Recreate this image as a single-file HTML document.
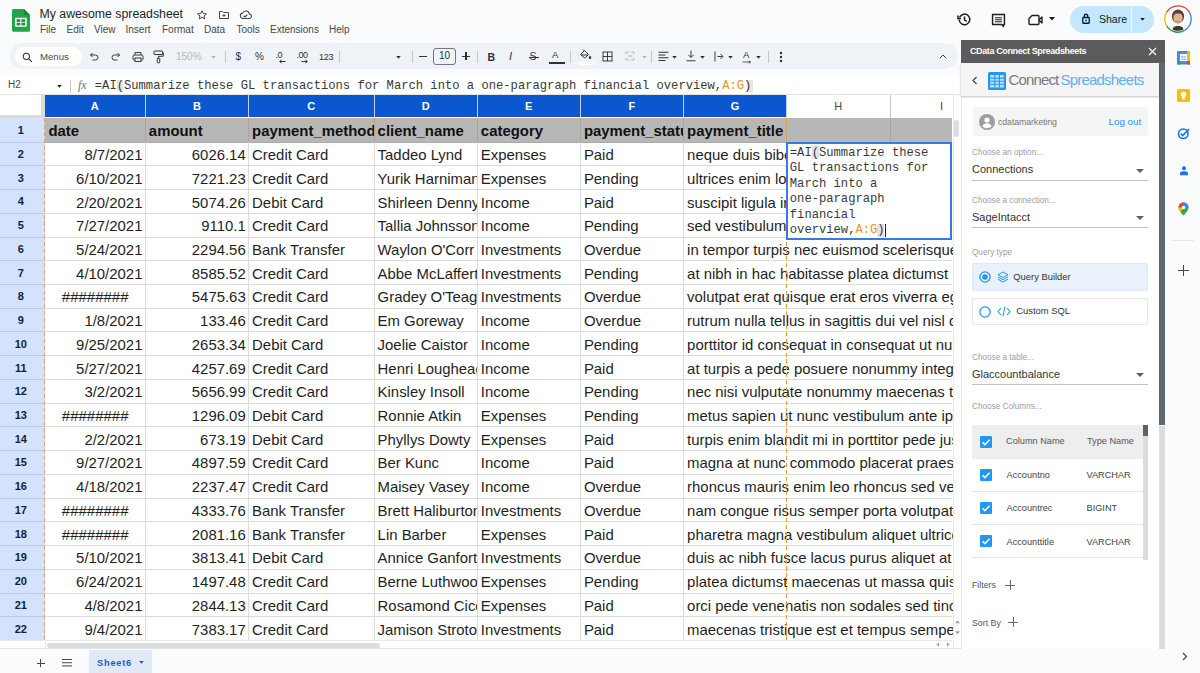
<!DOCTYPE html>
<html><head><meta charset="utf-8">
<style>
*{box-sizing:border-box;margin:0;padding:0}
html,body{width:1200px;height:673px;overflow:hidden;background:#f9fbfd;font-family:"Liberation Sans",sans-serif;color:#1f1f1f;position:relative}
.abs{position:absolute}
/* title bar */
#title{position:absolute;left:39.5px;top:7px;font-size:12.3px;color:#1f1f1f;white-space:nowrap;letter-spacing:0}
.menu{position:absolute;top:24px;font-size:10px;color:#444746;white-space:nowrap}
/* toolbar */
#toolbar{position:absolute;left:10px;top:43px;width:948px;height:25.5px;background:#eff3f8;border-radius:12.5px}
#menus{position:absolute;left:15px;top:47px;width:67px;height:19px;background:#fff;border-radius:10px}
.sep{position:absolute;top:51px;width:1px;height:12px;background:#c7c7c7}
.tb{position:absolute;font-size:9px;color:#444746;white-space:nowrap}
/* formula bar */
#fbar{position:absolute;left:0;top:75px;width:960px;height:20px;background:#fff;border-bottom:1px solid #e3e3e3}
.mono{font-family:"Liberation Mono",monospace}
/* grid */
#grid{position:absolute;left:0;top:95px;width:952.5px;height:545.5px;background:#fff;overflow:hidden}
#gridin{position:absolute;left:0;top:-95px;width:952.5px;height:673px}
.ch{position:absolute;top:95px;height:23.4px;background:#fff;color:#444746;font-size:11px;text-align:center;line-height:22px;border-right:1px solid #c7c7c7}
.ch.sel{background:#0b57d0;color:#fff;font-weight:bold;border-right:1.2px solid #c0d2f2;border-bottom:none;height:22px}
.ch.corner{left:0;width:44.8px;height:23.4px;background:#fff;border-right:4.5px solid #dadcd9;border-bottom:3.8px solid #dadcd9}
.rh{position:absolute;left:0;width:44.5px;background:#d3e3fd;color:#0f1f3f;font-weight:bold;font-size:11px;text-align:center;display:flex;align-items:center;justify-content:center;padding-right:2.8px}
.r1bg{position:absolute;left:44.8px;width:907.7px;background:#b7b7b7}
.hl{position:absolute;left:44.8px;width:907.7px;height:1px;background:#dcdcdc}
.hl.dark{background:#a9a9a9}
.hlr{position:absolute;left:0;width:44.5px;height:1px;background:#bccbe3}
.vl{position:absolute;width:1px;background:#dcdcdc}
.vl.dark{background:#a5a5a5}
.ct{position:absolute;height:23.73px;font-size:14.92px;line-height:23.73px;padding:0 3px 0 3.6px;white-space:nowrap;overflow:hidden;color:#1f1f1f}
.ct.rt{text-align:right;padding-right:2.5px}
.ct.b{font-weight:bold;color:#111;margin-top:-0.9px}
.ct.hash{padding-left:17px;font-size:15px}
.lbl{left:972px;margin-top:0.5px;font-size:8.2px;color:#9e9e9e;white-space:nowrap}
.val{left:972px;margin-top:1px;font-size:11px;color:#333;white-space:nowrap}
.th{margin-top:0.3px;font-size:9.2px;color:#555;white-space:nowrap}
.td{margin-top:0.8px;font-size:9.2px;color:#444;white-space:nowrap}
</style></head><body>

<!-- Sheets logo -->
<svg class="abs" style="left:12px;top:9.3px" width="18" height="23" viewBox="0 0 18 23">
<path d="M1.5 0H12l6 6v15.3a1.5 1.5 0 0 1-1.5 1.5h-15A1.5 1.5 0 0 1 0 21.3V1.5A1.5 1.5 0 0 1 1.5 0z" fill="#1fa64a"/>
<path d="M12 0l6 6h-5a1 1 0 0 1-1-1z" fill="#128c3b"/>
<rect x="3" y="8.7" width="11.7" height="9" rx="0.8" fill="#fff"/>
<rect x="4.6" y="10.2" width="3.7" height="2.7" fill="#1c8f42"/>
<rect x="9.4" y="10.2" width="3.7" height="2.7" fill="#1c8f42"/>
<rect x="4.6" y="13.7" width="3.7" height="2.7" fill="#1c8f42"/>
<rect x="9.4" y="13.7" width="3.7" height="2.7" fill="#1c8f42"/>
</svg>
<div id="title">My awesome spreadsheet</div>

<div class="menu" style="left:40px">File</div>
<div class="menu" style="left:66.5px">Edit</div>
<div class="menu" style="left:94px">View</div>
<div class="menu" style="left:125.5px">Insert</div>
<div class="menu" style="left:162px">Format</div>
<div class="menu" style="left:204px">Data</div>
<div class="menu" style="left:236.5px">Tools</div>
<div class="menu" style="left:270px">Extensions</div>
<div class="menu" style="left:329px">Help</div>


<!-- title icons -->
<svg class="abs" style="left:196px;top:9px" width="12" height="12" viewBox="0 0 24 24"><path d="M12 3.5l2.6 5.6 6.1.6-4.6 4.1 1.3 6-5.4-3.1-5.4 3.1 1.3-6-4.6-4.1 6.1-.6z" fill="none" stroke="#444746" stroke-width="2" stroke-linejoin="round"/></svg>
<svg class="abs" style="left:218px;top:9px" width="12" height="12" viewBox="0 0 24 24"><path d="M3 5h6l2 2h10v12H3z" fill="none" stroke="#444746" stroke-width="2" stroke-linejoin="round"/><path d="M12 10v6M9 13h6" stroke="#444746" stroke-width="1.8"/></svg>
<svg class="abs" style="left:238.5px;top:8.5px" width="13" height="12" viewBox="0 0 26 24"><path d="M7 19h13a4.5 4.5 0 0 0 .6-9A7 7 0 0 0 7.2 8.2 5.5 5.5 0 0 0 7 19z" fill="none" stroke="#444746" stroke-width="2.2"/><path d="M9.5 13.5l2.5 2.5 4.5-4.5" fill="none" stroke="#444746" stroke-width="2.2"/></svg>

<!-- top right -->
<svg class="abs" style="left:957px;top:12px" width="15" height="15" viewBox="0 0 24 24"><path d="M4.2 8.5A8.5 8.5 0 1 1 3.5 12" fill="none" stroke="#1f1f1f" stroke-width="2.4"/><path d="M1.5 5.5v5h5" fill="none" stroke="#1f1f1f" stroke-width="2.4"/><path d="M12 7v5.5l3.5 2.5" fill="none" stroke="#1f1f1f" stroke-width="2.4"/></svg>
<svg class="abs" style="left:990.5px;top:12.5px" width="15" height="15" viewBox="0 0 24 24"><path d="M2.5 2.5h19v16h-1.5v3l-3-3h-14.5z" fill="none" stroke="#1f1f1f" stroke-width="2.3" stroke-linejoin="round"/><path d="M6.5 7.5h11M6.5 10.7h11M6.5 13.9h11" stroke="#1f1f1f" stroke-width="1.8"/></svg>
<svg class="abs" style="left:1027.5px;top:14px" width="15" height="12" viewBox="0 0 30 24"><path d="M8 3h12a2 2 0 0 1 2 2v14a2 2 0 0 1-2 2H4a2 2 0 0 1-2-2V9z" fill="none" stroke="#1f1f1f" stroke-width="2.8" stroke-linejoin="round"/><path d="M22 12l6-6v12z" fill="none" stroke="#1f1f1f" stroke-width="2.6" stroke-linejoin="round"/></svg>
<svg class="abs" style="left:1049px;top:17px" width="6" height="4" viewBox="0 0 6 4"><path d="M0 0h6L3 3.5z" fill="#1f1f1f"/></svg>
<div class="abs" style="left:1070px;top:5.5px;width:83.5px;height:27px;background:#c2e7ff;border-radius:14px"></div>
<div class="abs" style="left:1130.5px;top:5.5px;width:1px;height:27px;background:#f9fbfd"></div>
<svg class="abs" style="left:1082px;top:13px" width="8" height="11" viewBox="0 0 16 22"><rect x="1.5" y="9" width="13" height="11.5" rx="1.5" fill="none" stroke="#001d35" stroke-width="2.6"/><path d="M4.5 9V6a3.5 3.5 0 0 1 7 0v3" fill="none" stroke="#001d35" stroke-width="2.6"/><circle cx="8" cy="14.8" r="1.6" fill="#001d35"/></svg>
<div class="abs" style="left:1099px;top:13px;font-size:10.5px;color:#001d35;letter-spacing:0">Share</div>
<svg class="abs" style="left:1139.5px;top:17.5px" width="5" height="3" viewBox="0 0 6 4"><path d="M0 0h6L3 3.5z" fill="#001d35"/></svg>
<svg class="abs" style="left:1164px;top:4.8px" width="28" height="28" viewBox="0 0 28 28">
<circle cx="14" cy="14" r="12.4" fill="#fff"/>
<path d="M2.57 7.40A13.2 13.2 0 0 1 25.43 7.40" fill="none" stroke="#e53935" stroke-width="1.3"/>
<path d="M25.43 7.40A13.2 13.2 0 0 1 20.60 25.43" fill="none" stroke="#3b78e7" stroke-width="1.3"/>
<path d="M20.60 25.43A13.2 13.2 0 0 1 2.57 20.60" fill="none" stroke="#2e9d4a" stroke-width="1.3"/>
<path d="M2.57 20.60A13.2 13.2 0 0 1 2.57 7.40" fill="none" stroke="#f6b400" stroke-width="1.3"/>
<path d="M8.6 24.5c0-2.6 2.4-3.6 5.4-3.6s5.4 1 5.4 3.6c-1.6.9-3.4 1.3-5.4 1.3s-3.8-.4-5.4-1.3z" fill="#3f3633"/>
<ellipse cx="14" cy="11.4" rx="6.1" ry="7" fill="#5a4038"/>
<ellipse cx="14" cy="13" rx="4.6" ry="5.6" fill="#e5b08e"/>
<path d="M9.4 10.2c0-3.2 2-4.6 4.6-4.6s4.6 1.4 4.6 4.6c-1-1.4-2.4-1.8-4.6-1.8s-3.6.4-4.6 1.8z" fill="#5a4038"/>
<path d="M12.3 16.6q1.7.9 3.4 0" stroke="#a0604a" stroke-width="0.7" fill="none"/>
</svg>

<div id="toolbar"></div>
<div id="menus"></div>

<div id="fbar"></div>

<svg class="abs" style="left:21.5px;top:51.5px" width="11" height="11" viewBox="0 0 24 24"><circle cx="9.5" cy="9.5" r="6.8" fill="none" stroke="#303134" stroke-width="2.3"/><path d="M14.5 14.5l7 7" stroke="#303134" stroke-width="2.4"/></svg>
<div class="abs" style="left:40px;top:51px;font-size:9.6px;color:#444746">Menus</div>
<svg class="abs" style="left:89px;top:51px" width="11" height="11" viewBox="0 0 22 22"><path d="M7 4L3 8l4 4" fill="none" stroke="#303134" stroke-width="1.9"/><path d="M3 8h10a5 5 0 0 1 0 10H7" fill="none" stroke="#303134" stroke-width="1.9"/></svg>
<svg class="abs" style="left:110px;top:51px" width="11" height="11" viewBox="0 0 22 22"><path d="M15 4l4 4-4 4" fill="none" stroke="#303134" stroke-width="1.9"/><path d="M19 8H9a5 5 0 0 0 0 10h6" fill="none" stroke="#303134" stroke-width="1.9"/></svg>
<svg class="abs" style="left:131.5px;top:50.5px" width="12" height="12" viewBox="0 0 24 24"><path d="M6 8V3h12v5" fill="none" stroke="#303134" stroke-width="1.9"/><rect x="2" y="8" width="20" height="10" rx="2" fill="none" stroke="#303134" stroke-width="1.9"/><rect x="6" y="14" width="12" height="7" fill="#edf2fa" stroke="#303134" stroke-width="1.9"/></svg>
<svg class="abs" style="left:153px;top:50px" width="11" height="14" viewBox="0 0 22 28"><rect x="2" y="2" width="17" height="7" rx="1" fill="none" stroke="#303134" stroke-width="2"/><path d="M19 5.5h1.5v7H11v4" fill="none" stroke="#303134" stroke-width="2"/><rect x="8.5" y="16.5" width="5" height="9" rx="1" fill="none" stroke="#303134" stroke-width="2"/></svg>
<div class="abs" style="left:176px;top:51px;font-size:10px;color:#b4b8bd">150%</div>
<svg class="abs" style="left:211px;top:55.5px" width="5" height="3" viewBox="0 0 6 4"><path d="M0 0h6L3 3.5z" fill="#b4b8bd"/></svg>
<div class="sep" style="left:225px"></div>
<div class="abs" style="left:235.5px;top:51px;font-size:10px;color:#303134">$</div>
<div class="abs" style="left:255px;top:51px;font-size:10px;color:#303134">%</div>
<div class="abs" style="left:275.5px;top:50px;font-size:9px;color:#303134;letter-spacing:-0.5px">.0</div>
<svg class="abs" style="left:279px;top:59px" width="7" height="5" viewBox="0 0 14 10"><path d="M13 5H2M5 1.5L1.5 5 5 8.5" fill="none" stroke="#303134" stroke-width="2"/></svg>
<div class="abs" style="left:296.5px;top:50px;font-size:9px;color:#303134;letter-spacing:-0.5px">.00</div>
<svg class="abs" style="left:301px;top:59px" width="7" height="5" viewBox="0 0 14 10"><path d="M1 5h11M9 1.5L12.5 5 9 8.5" fill="none" stroke="#303134" stroke-width="2"/></svg>
<div class="abs" style="left:319px;top:51.5px;font-size:9px;color:#303134;letter-spacing:-0.2px">123</div>
<div class="sep" style="left:339px"></div>
<svg class="abs" style="left:396px;top:55.5px" width="5" height="3" viewBox="0 0 6 4"><path d="M0 0h6L3 3.5z" fill="#303134"/></svg>
<div class="sep" style="left:411.5px"></div>
<div class="abs" style="left:419px;top:56px;width:7.5px;height:1.3px;background:#303134"></div>
<div class="abs" style="left:433px;top:48px;width:23px;height:16.5px;border:1px solid #747775;border-radius:3px;font-size:10px;text-align:center;line-height:14.5px;color:#303134">10</div>
<div class="abs" style="left:462px;top:56px;width:8px;height:1.3px;background:#303134"></div>
<div class="abs" style="left:465.35px;top:52px;width:1.3px;height:8px;background:#303134"></div>
<div class="sep" style="left:476.5px"></div>
<div class="abs" style="left:487.5px;top:50.5px;font-size:10.5px;font-weight:bold;color:#303134">B</div>
<div class="abs" style="left:509px;top:50px;font-size:11px;font-style:italic;color:#303134">I</div>
<div class="abs" style="left:529.5px;top:50px;font-size:10.5px;color:#303134">S</div>
<div class="abs" style="left:528.5px;top:56.5px;width:10px;height:1.2px;background:#303134"></div>
<div class="abs" style="left:552px;top:49px;font-size:9.5px;color:#303134">A</div>
<div class="abs" style="left:549px;top:61.5px;width:15.5px;height:2.8px;background:#303134"></div>
<div class="sep" style="left:570px"></div>
<svg class="abs" style="left:579px;top:49px" width="13" height="12" viewBox="0 0 26 24"><path d="M3 11l8-8 8 8-6 6a2 2 0 0 1-3 0z" fill="none" stroke="#303134" stroke-width="2"/><path d="M4 12h14" stroke="#303134" stroke-width="2"/><path d="M22 13s-2.5 3-2.5 4.5a2.5 2.5 0 0 0 5 0C24.5 16 22 13 22 13z" fill="#303134"/><path d="M8 1l3 3" stroke="#303134" stroke-width="1.9"/></svg>
<div class="abs" style="left:578.5px;top:62px;width:15px;height:2.5px;background:#fff"></div>
<svg class="abs" style="left:602px;top:50.5px" width="11" height="11" viewBox="0 0 22 22"><rect x="2" y="2" width="18" height="18" fill="none" stroke="#303134" stroke-width="1.9"/><path d="M11 2v18M2 11h18" stroke="#303134" stroke-width="1.9"/></svg>
<svg class="abs" style="left:625px;top:51px" width="10" height="10" viewBox="0 0 20 20"><path d="M2 6V2h6M12 2h6v4M18 14v4h-6M8 18H2v-4M5 10h10" fill="none" stroke="#b4b8bd" stroke-width="2"/></svg>
<svg class="abs" style="left:641.5px;top:55.5px" width="5" height="3" viewBox="0 0 6 4"><path d="M0 0h6L3 3.5z" fill="#b4b8bd"/></svg>
<div class="sep" style="left:651px"></div>
<svg class="abs" style="left:657.5px;top:50.5px" width="11" height="11" viewBox="0 0 22 22"><path d="M1 2.5h20M1 8h14M1 13.5h20M1 19h14" stroke="#303134" stroke-width="2"/></svg>
<svg class="abs" style="left:671.5px;top:55.5px" width="5" height="3" viewBox="0 0 6 4"><path d="M0 0h6L3 3.5z" fill="#303134"/></svg>
<svg class="abs" style="left:686px;top:50px" width="10" height="12" viewBox="0 0 20 24"><path d="M10 1v14M4.5 9.5L10 15l5.5-5.5M1 21.5h18" fill="none" stroke="#303134" stroke-width="1.9"/></svg>
<svg class="abs" style="left:699.5px;top:55.5px" width="5" height="3" viewBox="0 0 6 4"><path d="M0 0h6L3 3.5z" fill="#303134"/></svg>
<svg class="abs" style="left:713.5px;top:50.5px" width="10" height="11" viewBox="0 0 20 22"><path d="M2 1v20M7 11h10M13 6l5 5-5 5" fill="none" stroke="#303134" stroke-width="1.9"/></svg>
<svg class="abs" style="left:727.5px;top:55.5px" width="5" height="3" viewBox="0 0 6 4"><path d="M0 0h6L3 3.5z" fill="#303134"/></svg>
<div class="abs" style="left:743px;top:49px;font-size:9.5px;color:#303134">A</div>
<svg class="abs" style="left:742px;top:59.5px" width="10" height="4" viewBox="0 0 20 8"><path d="M1 4h16M13.5 1.5l3.5 2.5-3.5 2.5" fill="none" stroke="#303134" stroke-width="1.6"/></svg>
<svg class="abs" style="left:755.5px;top:55.5px" width="5" height="3" viewBox="0 0 6 4"><path d="M0 0h6L3 3.5z" fill="#303134"/></svg>
<div class="sep" style="left:767.5px"></div>
<svg class="abs" style="left:779px;top:50.5px" width="4" height="12" viewBox="0 0 4 12"><circle cx="2" cy="2" r="1.2" fill="#303134"/><circle cx="2" cy="6" r="1.2" fill="#303134"/><circle cx="2" cy="10" r="1.2" fill="#303134"/></svg>
<svg class="abs" style="left:938.5px;top:54px" width="8" height="5" viewBox="0 0 16 10"><path d="M1.5 8.5L8 2l6.5 6.5" fill="none" stroke="#303134" stroke-width="1.9"/></svg>

<!-- formula bar -->
<div class="abs" style="left:8px;top:79.3px;font-size:10px;color:#444746">H2</div>
<svg class="abs" style="left:57px;top:85px" width="5" height="3" viewBox="0 0 6 4"><path d="M0 0h6L3 3.5z" fill="#1f1f1f"/></svg>
<div class="abs" style="left:70px;top:79.5px;width:1px;height:13px;background:#c7c7c7"></div>
<div class="abs" style="left:78px;top:78px;font-size:12px;font-style:italic;color:#70757a;font-family:'Liberation Serif',serif">fx</div>
<div class="abs" style="left:116.8px;top:79.5px;width:6.5px;height:12px;background:#e6e6e6"></div>
<div class="abs" style="left:746.5px;top:79.5px;width:6.5px;height:12px;background:#e6e6e6"></div>
<div class="abs mono" style="left:94.8px;top:78.5px;font-size:12.17px;line-height:14px;color:#3a3a3a;white-space:nowrap">=AI(Summarize these GL transactions for March into a one-paragraph financial overview,<span style="color:#e8912d">A:G</span>)</div>


<div id="grid"><div id="gridin">
<div class="ch corner"></div>
<div class="ch sel" style="left:44.8px;width:100.95px">A</div>
<div class="ch sel" style="left:145.75px;width:103.25px">B</div>
<div class="ch sel" style="left:249px;width:125.5px">C</div>
<div class="ch sel" style="left:374.5px;width:103.25px">D</div>
<div class="ch sel" style="left:477.75px;width:103.05px">E</div>
<div class="ch sel" style="left:580.8px;width:103.2px">F</div>
<div class="ch sel" style="left:684px;width:103px">G</div>
<div class="ch" style="left:787px;width:103.5px">H</div>
<div class="ch" style="left:890.5px;width:103.2px">I</div>
<div class="rh" style="top:118.4px;height:23.73px">1</div>
<div class="rh" style="top:142.13px;height:23.73px">2</div>
<div class="rh" style="top:165.86px;height:23.73px">3</div>
<div class="rh" style="top:189.59px;height:23.73px">4</div>
<div class="rh" style="top:213.32px;height:23.73px">5</div>
<div class="rh" style="top:237.05px;height:23.73px">6</div>
<div class="rh" style="top:260.78px;height:23.73px">7</div>
<div class="rh" style="top:284.51px;height:23.73px">8</div>
<div class="rh" style="top:308.24px;height:23.73px">9</div>
<div class="rh" style="top:331.97px;height:23.73px">10</div>
<div class="rh" style="top:355.7px;height:23.73px">11</div>
<div class="rh" style="top:379.43px;height:23.73px">12</div>
<div class="rh" style="top:403.16px;height:23.73px">13</div>
<div class="rh" style="top:426.89px;height:23.73px">14</div>
<div class="rh" style="top:450.62px;height:23.73px">15</div>
<div class="rh" style="top:474.35px;height:23.73px">16</div>
<div class="rh" style="top:498.08px;height:23.73px">17</div>
<div class="rh" style="top:521.81px;height:23.73px">18</div>
<div class="rh" style="top:545.54px;height:23.73px">19</div>
<div class="rh" style="top:569.27px;height:23.73px">20</div>
<div class="rh" style="top:593px;height:23.73px">21</div>
<div class="rh" style="top:616.73px;height:23.73px">22</div>
<div class="r1bg" style="top:118.4px;height:23.73px"></div>
<div class="hl dark" style="top:141.63px"></div>
<div class="hl" style="top:165.36px"></div>
<div class="hl" style="top:189.09px"></div>
<div class="hl" style="top:212.82px"></div>
<div class="hl" style="top:236.55px"></div>
<div class="hl" style="top:260.28px"></div>
<div class="hl" style="top:284.01px"></div>
<div class="hl" style="top:307.74px"></div>
<div class="hl" style="top:331.47px"></div>
<div class="hl" style="top:355.2px"></div>
<div class="hl" style="top:378.93px"></div>
<div class="hl" style="top:402.66px"></div>
<div class="hl" style="top:426.39px"></div>
<div class="hl" style="top:450.12px"></div>
<div class="hl" style="top:473.85px"></div>
<div class="hl" style="top:497.58px"></div>
<div class="hl" style="top:521.31px"></div>
<div class="hl" style="top:545.04px"></div>
<div class="hl" style="top:568.77px"></div>
<div class="hl" style="top:592.5px"></div>
<div class="hl" style="top:616.23px"></div>
<div class="hl" style="top:639.96px"></div>
<div class="hlr" style="top:141.63px"></div>
<div class="hlr" style="top:165.36px"></div>
<div class="hlr" style="top:189.09px"></div>
<div class="hlr" style="top:212.82px"></div>
<div class="hlr" style="top:236.55px"></div>
<div class="hlr" style="top:260.28px"></div>
<div class="hlr" style="top:284.01px"></div>
<div class="hlr" style="top:307.74px"></div>
<div class="hlr" style="top:331.47px"></div>
<div class="hlr" style="top:355.2px"></div>
<div class="hlr" style="top:378.93px"></div>
<div class="hlr" style="top:402.66px"></div>
<div class="hlr" style="top:426.39px"></div>
<div class="hlr" style="top:450.12px"></div>
<div class="hlr" style="top:473.85px"></div>
<div class="hlr" style="top:497.58px"></div>
<div class="hlr" style="top:521.31px"></div>
<div class="hlr" style="top:545.04px"></div>
<div class="hlr" style="top:568.77px"></div>
<div class="hlr" style="top:592.5px"></div>
<div class="hlr" style="top:616.23px"></div>
<div class="hlr" style="top:639.96px"></div>
<div class="vl dark" style="left:144.75px;top:118.4px;height:23.73px"></div>
<div class="vl" style="left:144.75px;top:142.13px;height:23.73px"></div>
<div class="vl" style="left:144.75px;top:165.86px;height:23.73px"></div>
<div class="vl" style="left:144.75px;top:189.59px;height:23.73px"></div>
<div class="vl" style="left:144.75px;top:213.32px;height:23.73px"></div>
<div class="vl" style="left:144.75px;top:237.05px;height:23.73px"></div>
<div class="vl" style="left:144.75px;top:260.78px;height:23.73px"></div>
<div class="vl" style="left:144.75px;top:284.51px;height:23.73px"></div>
<div class="vl" style="left:144.75px;top:308.24px;height:23.73px"></div>
<div class="vl" style="left:144.75px;top:331.97px;height:23.73px"></div>
<div class="vl" style="left:144.75px;top:355.7px;height:23.73px"></div>
<div class="vl" style="left:144.75px;top:379.43px;height:23.73px"></div>
<div class="vl" style="left:144.75px;top:403.16px;height:23.73px"></div>
<div class="vl" style="left:144.75px;top:426.89px;height:23.73px"></div>
<div class="vl" style="left:144.75px;top:450.62px;height:23.73px"></div>
<div class="vl" style="left:144.75px;top:474.35px;height:23.73px"></div>
<div class="vl" style="left:144.75px;top:498.08px;height:23.73px"></div>
<div class="vl" style="left:144.75px;top:521.81px;height:23.73px"></div>
<div class="vl" style="left:144.75px;top:545.54px;height:23.73px"></div>
<div class="vl" style="left:144.75px;top:569.27px;height:23.73px"></div>
<div class="vl" style="left:144.75px;top:593px;height:23.73px"></div>
<div class="vl" style="left:144.75px;top:616.73px;height:23.73px"></div>
<div class="vl dark" style="left:248px;top:118.4px;height:23.73px"></div>
<div class="vl" style="left:248px;top:142.13px;height:23.73px"></div>
<div class="vl" style="left:248px;top:165.86px;height:23.73px"></div>
<div class="vl" style="left:248px;top:189.59px;height:23.73px"></div>
<div class="vl" style="left:248px;top:213.32px;height:23.73px"></div>
<div class="vl" style="left:248px;top:237.05px;height:23.73px"></div>
<div class="vl" style="left:248px;top:260.78px;height:23.73px"></div>
<div class="vl" style="left:248px;top:284.51px;height:23.73px"></div>
<div class="vl" style="left:248px;top:308.24px;height:23.73px"></div>
<div class="vl" style="left:248px;top:331.97px;height:23.73px"></div>
<div class="vl" style="left:248px;top:355.7px;height:23.73px"></div>
<div class="vl" style="left:248px;top:379.43px;height:23.73px"></div>
<div class="vl" style="left:248px;top:403.16px;height:23.73px"></div>
<div class="vl" style="left:248px;top:426.89px;height:23.73px"></div>
<div class="vl" style="left:248px;top:450.62px;height:23.73px"></div>
<div class="vl" style="left:248px;top:474.35px;height:23.73px"></div>
<div class="vl" style="left:248px;top:498.08px;height:23.73px"></div>
<div class="vl" style="left:248px;top:521.81px;height:23.73px"></div>
<div class="vl" style="left:248px;top:545.54px;height:23.73px"></div>
<div class="vl" style="left:248px;top:569.27px;height:23.73px"></div>
<div class="vl" style="left:248px;top:593px;height:23.73px"></div>
<div class="vl" style="left:248px;top:616.73px;height:23.73px"></div>
<div class="vl dark" style="left:373.5px;top:118.4px;height:23.73px"></div>
<div class="vl" style="left:373.5px;top:142.13px;height:23.73px"></div>
<div class="vl" style="left:373.5px;top:165.86px;height:23.73px"></div>
<div class="vl" style="left:373.5px;top:189.59px;height:23.73px"></div>
<div class="vl" style="left:373.5px;top:213.32px;height:23.73px"></div>
<div class="vl" style="left:373.5px;top:237.05px;height:23.73px"></div>
<div class="vl" style="left:373.5px;top:260.78px;height:23.73px"></div>
<div class="vl" style="left:373.5px;top:284.51px;height:23.73px"></div>
<div class="vl" style="left:373.5px;top:308.24px;height:23.73px"></div>
<div class="vl" style="left:373.5px;top:331.97px;height:23.73px"></div>
<div class="vl" style="left:373.5px;top:355.7px;height:23.73px"></div>
<div class="vl" style="left:373.5px;top:379.43px;height:23.73px"></div>
<div class="vl" style="left:373.5px;top:403.16px;height:23.73px"></div>
<div class="vl" style="left:373.5px;top:426.89px;height:23.73px"></div>
<div class="vl" style="left:373.5px;top:450.62px;height:23.73px"></div>
<div class="vl" style="left:373.5px;top:474.35px;height:23.73px"></div>
<div class="vl" style="left:373.5px;top:498.08px;height:23.73px"></div>
<div class="vl" style="left:373.5px;top:521.81px;height:23.73px"></div>
<div class="vl" style="left:373.5px;top:545.54px;height:23.73px"></div>
<div class="vl" style="left:373.5px;top:569.27px;height:23.73px"></div>
<div class="vl" style="left:373.5px;top:593px;height:23.73px"></div>
<div class="vl" style="left:373.5px;top:616.73px;height:23.73px"></div>
<div class="vl dark" style="left:476.75px;top:118.4px;height:23.73px"></div>
<div class="vl" style="left:476.75px;top:142.13px;height:23.73px"></div>
<div class="vl" style="left:476.75px;top:165.86px;height:23.73px"></div>
<div class="vl" style="left:476.75px;top:189.59px;height:23.73px"></div>
<div class="vl" style="left:476.75px;top:213.32px;height:23.73px"></div>
<div class="vl" style="left:476.75px;top:237.05px;height:23.73px"></div>
<div class="vl" style="left:476.75px;top:260.78px;height:23.73px"></div>
<div class="vl" style="left:476.75px;top:284.51px;height:23.73px"></div>
<div class="vl" style="left:476.75px;top:308.24px;height:23.73px"></div>
<div class="vl" style="left:476.75px;top:331.97px;height:23.73px"></div>
<div class="vl" style="left:476.75px;top:355.7px;height:23.73px"></div>
<div class="vl" style="left:476.75px;top:379.43px;height:23.73px"></div>
<div class="vl" style="left:476.75px;top:403.16px;height:23.73px"></div>
<div class="vl" style="left:476.75px;top:426.89px;height:23.73px"></div>
<div class="vl" style="left:476.75px;top:450.62px;height:23.73px"></div>
<div class="vl" style="left:476.75px;top:474.35px;height:23.73px"></div>
<div class="vl" style="left:476.75px;top:498.08px;height:23.73px"></div>
<div class="vl" style="left:476.75px;top:521.81px;height:23.73px"></div>
<div class="vl" style="left:476.75px;top:545.54px;height:23.73px"></div>
<div class="vl" style="left:476.75px;top:569.27px;height:23.73px"></div>
<div class="vl" style="left:476.75px;top:593px;height:23.73px"></div>
<div class="vl" style="left:476.75px;top:616.73px;height:23.73px"></div>
<div class="vl dark" style="left:579.8px;top:118.4px;height:23.73px"></div>
<div class="vl" style="left:579.8px;top:142.13px;height:23.73px"></div>
<div class="vl" style="left:579.8px;top:165.86px;height:23.73px"></div>
<div class="vl" style="left:579.8px;top:189.59px;height:23.73px"></div>
<div class="vl" style="left:579.8px;top:213.32px;height:23.73px"></div>
<div class="vl" style="left:579.8px;top:237.05px;height:23.73px"></div>
<div class="vl" style="left:579.8px;top:260.78px;height:23.73px"></div>
<div class="vl" style="left:579.8px;top:284.51px;height:23.73px"></div>
<div class="vl" style="left:579.8px;top:308.24px;height:23.73px"></div>
<div class="vl" style="left:579.8px;top:331.97px;height:23.73px"></div>
<div class="vl" style="left:579.8px;top:355.7px;height:23.73px"></div>
<div class="vl" style="left:579.8px;top:379.43px;height:23.73px"></div>
<div class="vl" style="left:579.8px;top:403.16px;height:23.73px"></div>
<div class="vl" style="left:579.8px;top:426.89px;height:23.73px"></div>
<div class="vl" style="left:579.8px;top:450.62px;height:23.73px"></div>
<div class="vl" style="left:579.8px;top:474.35px;height:23.73px"></div>
<div class="vl" style="left:579.8px;top:498.08px;height:23.73px"></div>
<div class="vl" style="left:579.8px;top:521.81px;height:23.73px"></div>
<div class="vl" style="left:579.8px;top:545.54px;height:23.73px"></div>
<div class="vl" style="left:579.8px;top:569.27px;height:23.73px"></div>
<div class="vl" style="left:579.8px;top:593px;height:23.73px"></div>
<div class="vl" style="left:579.8px;top:616.73px;height:23.73px"></div>
<div class="vl dark" style="left:683px;top:118.4px;height:23.73px"></div>
<div class="vl" style="left:683px;top:142.13px;height:23.73px"></div>
<div class="vl" style="left:683px;top:165.86px;height:23.73px"></div>
<div class="vl" style="left:683px;top:189.59px;height:23.73px"></div>
<div class="vl" style="left:683px;top:213.32px;height:23.73px"></div>
<div class="vl" style="left:683px;top:237.05px;height:23.73px"></div>
<div class="vl" style="left:683px;top:260.78px;height:23.73px"></div>
<div class="vl" style="left:683px;top:284.51px;height:23.73px"></div>
<div class="vl" style="left:683px;top:308.24px;height:23.73px"></div>
<div class="vl" style="left:683px;top:331.97px;height:23.73px"></div>
<div class="vl" style="left:683px;top:355.7px;height:23.73px"></div>
<div class="vl" style="left:683px;top:379.43px;height:23.73px"></div>
<div class="vl" style="left:683px;top:403.16px;height:23.73px"></div>
<div class="vl" style="left:683px;top:426.89px;height:23.73px"></div>
<div class="vl" style="left:683px;top:450.62px;height:23.73px"></div>
<div class="vl" style="left:683px;top:474.35px;height:23.73px"></div>
<div class="vl" style="left:683px;top:498.08px;height:23.73px"></div>
<div class="vl" style="left:683px;top:521.81px;height:23.73px"></div>
<div class="vl" style="left:683px;top:545.54px;height:23.73px"></div>
<div class="vl" style="left:683px;top:569.27px;height:23.73px"></div>
<div class="vl" style="left:683px;top:593px;height:23.73px"></div>
<div class="vl" style="left:683px;top:616.73px;height:23.73px"></div>
<div class="vl dark" style="left:786px;top:118.4px;height:23.73px"></div>
<div class="vl" style="left:786px;top:142.13px;height:23.73px"></div>
<div class="vl" style="left:786px;top:165.86px;height:23.73px"></div>
<div class="vl" style="left:786px;top:189.59px;height:23.73px"></div>
<div class="vl" style="left:786px;top:213.32px;height:23.73px"></div>
<div class="vl dark" style="left:889.5px;top:118.4px;height:23.73px"></div>
<div class="vl" style="left:889.5px;top:142.13px;height:23.73px"></div>
<div class="vl" style="left:889.5px;top:165.86px;height:23.73px"></div>
<div class="vl" style="left:889.5px;top:189.59px;height:23.73px"></div>
<div class="vl" style="left:889.5px;top:213.32px;height:23.73px"></div>
<div class="ct b" style="left:44.8px;top:119.4px;width:100.15px">date</div>
<div class="ct b" style="left:145.25px;top:119.4px;width:102.95px">amount</div>
<div class="ct b" style="left:248.5px;top:119.4px;width:125.2px">payment_method</div>
<div class="ct b" style="left:374px;top:119.4px;width:102.95px">client_name</div>
<div class="ct b" style="left:477.25px;top:119.4px;width:102.75px">category</div>
<div class="ct b" style="left:580.3px;top:119.4px;width:102.9px">payment_status</div>
<div class="ct b" style="left:683.5px;top:119.4px;width:102.7px">payment_title</div>
<div class="ct rt" style="left:44.8px;top:143.12px;width:100.15px">8/7/2021</div>
<div class="ct rt" style="left:145.25px;top:143.12px;width:102.95px">6026.14</div>
<div class="ct" style="left:248.5px;top:143.12px;width:125.2px">Credit Card</div>
<div class="ct" style="left:374px;top:143.12px;width:102.95px">Taddeo Lynd</div>
<div class="ct" style="left:477.25px;top:143.12px;width:102.75px">Expenses</div>
<div class="ct" style="left:580.3px;top:143.12px;width:102.9px">Paid</div>
<div class="ct" style="left:683.5px;top:143.12px;width:102px">neque duis bibendum morbi</div>
<div class="ct rt" style="left:44.8px;top:166.84px;width:100.15px">6/10/2021</div>
<div class="ct rt" style="left:145.25px;top:166.84px;width:102.95px">7221.23</div>
<div class="ct" style="left:248.5px;top:166.84px;width:125.2px">Credit Card</div>
<div class="ct" style="left:374px;top:166.84px;width:102.95px">Yurik Harniman</div>
<div class="ct" style="left:477.25px;top:166.84px;width:102.75px">Expenses</div>
<div class="ct" style="left:580.3px;top:166.84px;width:102.9px">Pending</div>
<div class="ct" style="left:683.5px;top:166.84px;width:102px">ultrices enim lorem ipsum</div>
<div class="ct rt" style="left:44.8px;top:190.56px;width:100.15px">2/20/2021</div>
<div class="ct rt" style="left:145.25px;top:190.56px;width:102.95px">5074.26</div>
<div class="ct" style="left:248.5px;top:190.56px;width:125.2px">Debit Card</div>
<div class="ct" style="left:374px;top:190.56px;width:102.95px">Shirleen Denny</div>
<div class="ct" style="left:477.25px;top:190.56px;width:102.75px">Income</div>
<div class="ct" style="left:580.3px;top:190.56px;width:102.9px">Paid</div>
<div class="ct" style="left:683.5px;top:190.56px;width:102px">suscipit ligula in lacus</div>
<div class="ct rt" style="left:44.8px;top:214.28px;width:100.15px">7/27/2021</div>
<div class="ct rt" style="left:145.25px;top:214.28px;width:102.95px">9110.1</div>
<div class="ct" style="left:248.5px;top:214.28px;width:125.2px">Credit Card</div>
<div class="ct" style="left:374px;top:214.28px;width:102.95px">Tallia Johnsson</div>
<div class="ct" style="left:477.25px;top:214.28px;width:102.75px">Income</div>
<div class="ct" style="left:580.3px;top:214.28px;width:102.9px">Pending</div>
<div class="ct" style="left:683.5px;top:214.28px;width:102px">sed vestibulum sit amet</div>
<div class="ct rt" style="left:44.8px;top:238px;width:100.15px">5/24/2021</div>
<div class="ct rt" style="left:145.25px;top:238px;width:102.95px">2294.56</div>
<div class="ct" style="left:248.5px;top:238px;width:125.2px">Bank Transfer</div>
<div class="ct" style="left:374px;top:238px;width:102.95px">Waylon O&#39;Corr</div>
<div class="ct" style="left:477.25px;top:238px;width:102.75px">Investments</div>
<div class="ct" style="left:580.3px;top:238px;width:102.9px">Overdue</div>
<div class="ct" style="left:683.5px;top:238px;width:269px">in tempor turpis nec euismod scelerisque</div>
<div class="ct rt" style="left:44.8px;top:261.72px;width:100.15px">4/10/2021</div>
<div class="ct rt" style="left:145.25px;top:261.72px;width:102.95px">8585.52</div>
<div class="ct" style="left:248.5px;top:261.72px;width:125.2px">Credit Card</div>
<div class="ct" style="left:374px;top:261.72px;width:102.95px">Abbe McLafferty</div>
<div class="ct" style="left:477.25px;top:261.72px;width:102.75px">Investments</div>
<div class="ct" style="left:580.3px;top:261.72px;width:102.9px">Pending</div>
<div class="ct" style="left:683.5px;top:261.72px;width:269px">at nibh in hac habitasse platea dictumst</div>
<div class="ct hash" style="left:44.8px;top:285.44px;width:99.45px">########</div>
<div class="ct rt" style="left:145.25px;top:285.44px;width:102.95px">5475.63</div>
<div class="ct" style="left:248.5px;top:285.44px;width:125.2px">Credit Card</div>
<div class="ct" style="left:374px;top:285.44px;width:102.95px">Gradey O&#39;Teague</div>
<div class="ct" style="left:477.25px;top:285.44px;width:102.75px">Investments</div>
<div class="ct" style="left:580.3px;top:285.44px;width:102.9px">Overdue</div>
<div class="ct" style="left:683.5px;top:285.44px;width:269px">volutpat erat quisque erat eros viverra eget</div>
<div class="ct rt" style="left:44.8px;top:309.16px;width:100.15px">1/8/2021</div>
<div class="ct rt" style="left:145.25px;top:309.16px;width:102.95px">133.46</div>
<div class="ct" style="left:248.5px;top:309.16px;width:125.2px">Credit Card</div>
<div class="ct" style="left:374px;top:309.16px;width:102.95px">Em Goreway</div>
<div class="ct" style="left:477.25px;top:309.16px;width:102.75px">Income</div>
<div class="ct" style="left:580.3px;top:309.16px;width:102.9px">Overdue</div>
<div class="ct" style="left:683.5px;top:309.16px;width:269px">rutrum nulla tellus in sagittis dui vel nisl duis</div>
<div class="ct rt" style="left:44.8px;top:332.88px;width:100.15px">9/25/2021</div>
<div class="ct rt" style="left:145.25px;top:332.88px;width:102.95px">2653.34</div>
<div class="ct" style="left:248.5px;top:332.88px;width:125.2px">Debit Card</div>
<div class="ct" style="left:374px;top:332.88px;width:102.95px">Joelie Caistor</div>
<div class="ct" style="left:477.25px;top:332.88px;width:102.75px">Income</div>
<div class="ct" style="left:580.3px;top:332.88px;width:102.9px">Pending</div>
<div class="ct" style="left:683.5px;top:332.88px;width:269px">porttitor id consequat in consequat ut nulla</div>
<div class="ct rt" style="left:44.8px;top:356.6px;width:100.15px">5/27/2021</div>
<div class="ct rt" style="left:145.25px;top:356.6px;width:102.95px">4257.69</div>
<div class="ct" style="left:248.5px;top:356.6px;width:125.2px">Credit Card</div>
<div class="ct" style="left:374px;top:356.6px;width:102.95px">Henri Loughead</div>
<div class="ct" style="left:477.25px;top:356.6px;width:102.75px">Income</div>
<div class="ct" style="left:580.3px;top:356.6px;width:102.9px">Paid</div>
<div class="ct" style="left:683.5px;top:356.6px;width:269px">at turpis a pede posuere nonummy integer</div>
<div class="ct rt" style="left:44.8px;top:380.32px;width:100.15px">3/2/2021</div>
<div class="ct rt" style="left:145.25px;top:380.32px;width:102.95px">5656.99</div>
<div class="ct" style="left:248.5px;top:380.32px;width:125.2px">Credit Card</div>
<div class="ct" style="left:374px;top:380.32px;width:102.95px">Kinsley Insoll</div>
<div class="ct" style="left:477.25px;top:380.32px;width:102.75px">Income</div>
<div class="ct" style="left:580.3px;top:380.32px;width:102.9px">Pending</div>
<div class="ct" style="left:683.5px;top:380.32px;width:269px">nec nisi vulputate nonummy maecenas tincidunt</div>
<div class="ct hash" style="left:44.8px;top:404.04px;width:99.45px">########</div>
<div class="ct rt" style="left:145.25px;top:404.04px;width:102.95px">1296.09</div>
<div class="ct" style="left:248.5px;top:404.04px;width:125.2px">Debit Card</div>
<div class="ct" style="left:374px;top:404.04px;width:102.95px">Ronnie Atkin</div>
<div class="ct" style="left:477.25px;top:404.04px;width:102.75px">Expenses</div>
<div class="ct" style="left:580.3px;top:404.04px;width:102.9px">Pending</div>
<div class="ct" style="left:683.5px;top:404.04px;width:269px">metus sapien ut nunc vestibulum ante ipsum</div>
<div class="ct rt" style="left:44.8px;top:427.76px;width:100.15px">2/2/2021</div>
<div class="ct rt" style="left:145.25px;top:427.76px;width:102.95px">673.19</div>
<div class="ct" style="left:248.5px;top:427.76px;width:125.2px">Debit Card</div>
<div class="ct" style="left:374px;top:427.76px;width:102.95px">Phyllys Dowty</div>
<div class="ct" style="left:477.25px;top:427.76px;width:102.75px">Expenses</div>
<div class="ct" style="left:580.3px;top:427.76px;width:102.9px">Paid</div>
<div class="ct" style="left:683.5px;top:427.76px;width:269px">turpis enim blandit mi in porttitor pede justo</div>
<div class="ct rt" style="left:44.8px;top:451.48px;width:100.15px">9/27/2021</div>
<div class="ct rt" style="left:145.25px;top:451.48px;width:102.95px">4897.59</div>
<div class="ct" style="left:248.5px;top:451.48px;width:125.2px">Credit Card</div>
<div class="ct" style="left:374px;top:451.48px;width:102.95px">Ber Kunc</div>
<div class="ct" style="left:477.25px;top:451.48px;width:102.75px">Income</div>
<div class="ct" style="left:580.3px;top:451.48px;width:102.9px">Paid</div>
<div class="ct" style="left:683.5px;top:451.48px;width:269px">magna at nunc commodo placerat praesent</div>
<div class="ct rt" style="left:44.8px;top:475.2px;width:100.15px">4/18/2021</div>
<div class="ct rt" style="left:145.25px;top:475.2px;width:102.95px">2237.47</div>
<div class="ct" style="left:248.5px;top:475.2px;width:125.2px">Credit Card</div>
<div class="ct" style="left:374px;top:475.2px;width:102.95px">Maisey Vasey</div>
<div class="ct" style="left:477.25px;top:475.2px;width:102.75px">Income</div>
<div class="ct" style="left:580.3px;top:475.2px;width:102.9px">Overdue</div>
<div class="ct" style="left:683.5px;top:475.2px;width:269px">rhoncus mauris enim leo rhoncus sed vestibulum</div>
<div class="ct hash" style="left:44.8px;top:498.92px;width:99.45px">########</div>
<div class="ct rt" style="left:145.25px;top:498.92px;width:102.95px">4333.76</div>
<div class="ct" style="left:248.5px;top:498.92px;width:125.2px">Bank Transfer</div>
<div class="ct" style="left:374px;top:498.92px;width:102.95px">Brett Haliburton</div>
<div class="ct" style="left:477.25px;top:498.92px;width:102.75px">Investments</div>
<div class="ct" style="left:580.3px;top:498.92px;width:102.9px">Overdue</div>
<div class="ct" style="left:683.5px;top:498.92px;width:269px">nam congue risus semper porta volutpat</div>
<div class="ct hash" style="left:44.8px;top:522.64px;width:99.45px">########</div>
<div class="ct rt" style="left:145.25px;top:522.64px;width:102.95px">2081.16</div>
<div class="ct" style="left:248.5px;top:522.64px;width:125.2px">Bank Transfer</div>
<div class="ct" style="left:374px;top:522.64px;width:102.95px">Lin Barber</div>
<div class="ct" style="left:477.25px;top:522.64px;width:102.75px">Expenses</div>
<div class="ct" style="left:580.3px;top:522.64px;width:102.9px">Paid</div>
<div class="ct" style="left:683.5px;top:522.64px;width:269px">pharetra magna vestibulum aliquet ultrices</div>
<div class="ct rt" style="left:44.8px;top:546.36px;width:100.15px">5/10/2021</div>
<div class="ct rt" style="left:145.25px;top:546.36px;width:102.95px">3813.41</div>
<div class="ct" style="left:248.5px;top:546.36px;width:125.2px">Debit Card</div>
<div class="ct" style="left:374px;top:546.36px;width:102.95px">Annice Ganforth</div>
<div class="ct" style="left:477.25px;top:546.36px;width:102.75px">Investments</div>
<div class="ct" style="left:580.3px;top:546.36px;width:102.9px">Overdue</div>
<div class="ct" style="left:683.5px;top:546.36px;width:269px">duis ac nibh fusce lacus purus aliquet at</div>
<div class="ct rt" style="left:44.8px;top:570.08px;width:100.15px">6/24/2021</div>
<div class="ct rt" style="left:145.25px;top:570.08px;width:102.95px">1497.48</div>
<div class="ct" style="left:248.5px;top:570.08px;width:125.2px">Credit Card</div>
<div class="ct" style="left:374px;top:570.08px;width:102.95px">Berne Luthwood</div>
<div class="ct" style="left:477.25px;top:570.08px;width:102.75px">Expenses</div>
<div class="ct" style="left:580.3px;top:570.08px;width:102.9px">Pending</div>
<div class="ct" style="left:683.5px;top:570.08px;width:269px">platea dictumst maecenas ut massa quis</div>
<div class="ct rt" style="left:44.8px;top:593.8px;width:100.15px">4/8/2021</div>
<div class="ct rt" style="left:145.25px;top:593.8px;width:102.95px">2844.13</div>
<div class="ct" style="left:248.5px;top:593.8px;width:125.2px">Credit Card</div>
<div class="ct" style="left:374px;top:593.8px;width:102.95px">Rosamond Cicco</div>
<div class="ct" style="left:477.25px;top:593.8px;width:102.75px">Expenses</div>
<div class="ct" style="left:580.3px;top:593.8px;width:102.9px">Paid</div>
<div class="ct" style="left:683.5px;top:593.8px;width:269px">orci pede venenatis non sodales sed tincidunt</div>
<div class="ct rt" style="left:44.8px;top:617.52px;width:100.15px">9/4/2021</div>
<div class="ct rt" style="left:145.25px;top:617.52px;width:102.95px">7383.17</div>
<div class="ct" style="left:248.5px;top:617.52px;width:125.2px">Credit Card</div>
<div class="ct" style="left:374px;top:617.52px;width:102.95px">Jamison Stroton</div>
<div class="ct" style="left:477.25px;top:617.52px;width:102.75px">Investments</div>
<div class="ct" style="left:580.3px;top:617.52px;width:102.9px">Paid</div>
<div class="ct" style="left:683.5px;top:617.52px;width:269px">maecenas tristique est et tempus semper</div>

<!-- range highlight -->
<div class="abs" style="left:44.4px;top:118px;width:742.3px;height:1px;background:rgba(238,172,120,0.75)"></div>
<div class="abs" style="left:44.4px;top:118px;width:1px;height:522px;background:repeating-linear-gradient(180deg,#dca080 0 4px,rgba(230,190,160,0.4) 4px 6.9px)"></div>
<div class="abs" style="left:785.8px;top:118px;width:1.3px;height:522px;background:repeating-linear-gradient(180deg,#f09a30 0 4px,transparent 4px 6.9px)"></div>
<!-- editor -->
<div class="abs" style="left:786.3px;top:141.5px;width:166px;height:98px;background:#fff;border:2px solid #3b78e7"></div>
<div class="abs" style="left:811.5px;top:145px;width:7.3px;height:13.5px;background:#e3e3e3"></div>
<div class="abs" style="left:877px;top:223.5px;width:7.3px;height:13.5px;background:#e3e3e3"></div>
<div class="abs mono" style="left:789.8px;top:145.5px;font-size:12.17px;line-height:15.6px;color:#3a3a3a;white-space:pre">=AI(Summarize these
GL transactions for
March into a
one-paragraph
financial
overview,<span style="color:#e8912d">A:G</span>)</div>
<div class="abs" style="left:884.5px;top:224px;width:1px;height:13px;background:#1f1f1f"></div>

</div></div>


<!-- grid scrollbars -->
<div class="abs" style="left:952.5px;top:95px;width:8px;height:553px;background:#fff;border-left:1px solid #e9e9e9"></div>
<div class="abs" style="left:954.2px;top:119.5px;width:4.5px;height:17.5px;background:#dadce0;border-radius:2px"></div>
<svg class="abs" style="left:954.5px;top:620px" width="5" height="4" viewBox="0 0 6 4"><path d="M0 3.5h6L3 0z" fill="#9aa0a6"/></svg>
<svg class="abs" style="left:954.5px;top:631px" width="5" height="4" viewBox="0 0 6 4"><path d="M0 0h6L3 3.5z" fill="#9aa0a6"/></svg>
<div class="abs" style="left:0;top:640.3px;width:952.5px;height:8px;background:#fff;border-top:1px solid #e8eaed"></div>
<div class="abs" style="left:44.5px;top:640.3px;width:1px;height:8px;background:#e8eaed"></div>
<div class="abs" style="left:47px;top:642.5px;width:333px;height:5px;background:#dadce0;border-radius:3px"></div>
<svg class="abs" style="left:946.5px;top:642px" width="3" height="5" viewBox="0 0 4 6"><path d="M0 0v6l3.5-3z" fill="#9aa0a6"/></svg>
<svg class="abs" style="left:936px;top:642px" width="3" height="5" viewBox="0 0 4 6"><path d="M4 0v6L.5 3z" fill="#9aa0a6"/></svg>
<!-- bottom bar -->
<div class="abs" style="left:0;top:648.3px;width:1200px;height:25px;background:#f9fbfd;border-top:1px solid #e3e3e3"></div>
<div class="abs" style="left:36.5px;top:662.5px;width:8px;height:1.3px;background:#444746"></div>
<div class="abs" style="left:39.85px;top:659px;width:1.3px;height:8px;background:#444746"></div>
<div class="abs" style="left:62px;top:659px;width:10px;height:1.2px;background:#444746;box-shadow:0 3.2px 0 #444746,0 6.4px 0 #444746"></div>
<div class="abs" style="left:89px;top:650px;width:63px;height:23px;background:#e1e9f7"></div>
<div class="abs" style="left:97px;top:658.3px;font-size:9.3px;font-weight:bold;color:#1f5bc4;letter-spacing:0.75px">Sheet6</div>
<svg class="abs" style="left:139px;top:661px" width="5" height="3" viewBox="0 0 6 4"><path d="M0 0h6L3 3.5z" fill="#0b57d0"/></svg>
<svg class="abs" style="left:1182px;top:651.5px" width="6" height="9" viewBox="0 0 12 18"><path d="M2 2l7 7-7 7" fill="none" stroke="#444746" stroke-width="2.4"/></svg>

<!-- sidebar -->
<div class="abs" style="left:960.5px;top:39.5px;width:204px;height:609px;background:#fff;border-left:1px solid #ebebeb"></div>
<div class="abs" style="left:961px;top:39.5px;width:203.5px;height:23.3px;background:#5b5b5b"></div>
<div class="abs" style="left:970px;top:45.5px;font-size:9px;font-weight:bold;color:#fff;letter-spacing:-0.38px">CData Connect Spreadsheets</div>
<svg class="abs" style="left:1148px;top:46.5px" width="9" height="9" viewBox="0 0 18 18"><path d="M2 2l14 14M16 2L2 16" stroke="#fff" stroke-width="2.2"/></svg>
<div class="abs" style="left:1159px;top:62.8px;width:5.5px;height:362.7px;background:#5f6870"></div>
<div class="abs" style="left:1159px;top:425.5px;width:5.5px;height:223px;background:#dcdcdc"></div>
<div class="abs" style="left:961px;top:62.8px;width:198px;height:33.2px;background:#f5f5f5;box-shadow:0 1px 2px rgba(0,0,0,0.25)"></div>
<svg class="abs" style="left:970.5px;top:75.5px" width="7" height="9" viewBox="0 0 14 18"><path d="M11 2L4 9l7 7" fill="none" stroke="#424242" stroke-width="2.4"/></svg>
<svg class="abs" style="left:988px;top:71.5px" width="18" height="18" viewBox="0 0 18 18"><rect x="0" y="0" width="18" height="18" rx="1.5" fill="#2196f3"/><rect x="2.2" y="3" width="13.6" height="12.5" fill="#bfe2fd"/><path d="M2.2 6.1h13.6M2.2 9.2h13.6M2.2 12.3h13.6M6.8 3v12.5M11.4 3v12.5" stroke="#2196f3" stroke-width="1.1"/></svg>
<div class="abs" style="left:1008.5px;top:71px;font-size:15px;color:#7a7a7a;letter-spacing:-0.85px;white-space:nowrap">Connect</div><div class="abs" style="left:1060.5px;top:71px;font-size:15px;color:#5eb0f3;letter-spacing:-0.8px;white-space:nowrap">Spreadsheets</div>

<div class="abs" style="left:972.5px;top:106.5px;width:175.5px;height:29.5px;background:#f5f5f5;border-radius:3px"></div>
<svg class="abs" style="left:979px;top:114px" width="16" height="16" viewBox="0 0 16 16"><circle cx="8" cy="8" r="8" fill="#9e9e9e"/><circle cx="8" cy="6" r="2.6" fill="#fff"/><path d="M3.3 12.3c.8-2 2.6-3 4.7-3s3.9 1 4.7 3A6.5 6.5 0 0 1 3.3 12.3z" fill="#fff"/></svg>
<div class="abs" style="left:998px;top:116.5px;font-size:8.8px;color:#757575;letter-spacing:-0.1px">cdatamarketing</div>
<div class="abs" style="left:1108.5px;top:116px;font-size:9.8px;color:#2196f3">Log out</div>

<div class="abs lbl" style="top:147.5px">Choose an option...</div>
<div class="abs val" style="top:162px">Connections</div>
<svg class="abs" style="left:1136px;top:168.5px" width="8" height="4" viewBox="0 0 8 4"><path d="M0 0h8L4 4z" fill="#616161"/></svg>
<div class="abs" style="left:972px;top:179.5px;width:176px;height:1.2px;background:#c4c4c4"></div>
<div class="abs lbl" style="top:195px">Choose a connection...</div>
<div class="abs val" style="top:209.5px">SageIntacct</div>
<svg class="abs" style="left:1136px;top:215.5px" width="8" height="4" viewBox="0 0 8 4"><path d="M0 0h8L4 4z" fill="#616161"/></svg>
<div class="abs" style="left:972px;top:227px;width:176px;height:1.2px;background:#c4c4c4"></div>

<div class="abs lbl" style="top:247px">Query type</div>
<div class="abs" style="left:972.3px;top:263.4px;width:175.6px;height:27.8px;background:#e8f1fc;border:1px solid #dbe8f7;border-radius:2px"></div>
<svg class="abs" style="left:978.5px;top:271px" width="12" height="12" viewBox="0 0 12 12"><circle cx="6" cy="6" r="5.1" fill="none" stroke="#2196f3" stroke-width="1.3"/><circle cx="6" cy="6" r="2.8" fill="#2196f3"/></svg>
<svg class="abs" style="left:996.5px;top:271px" width="12" height="12" viewBox="0 0 24 24"><path d="M12 2L2 7.5 12 13l10-5.5z" fill="none" stroke="#2196f3" stroke-width="2" stroke-linejoin="round"/><path d="M2 12l10 5.5L22 12M2 16.5L12 22l10-5.5" fill="none" stroke="#2196f3" stroke-width="2" stroke-linejoin="round"/></svg>
<div class="abs" style="left:1013.3px;top:270.8px;font-size:9.4px;color:#333">Query Builder</div>
<div class="abs" style="left:972.3px;top:297.6px;width:175.6px;height:27.4px;background:#fff;border:1px solid #e6e6e6;border-radius:2px"></div>
<svg class="abs" style="left:978.5px;top:305.5px" width="12" height="12" viewBox="0 0 12 12"><circle cx="6" cy="6" r="5.1" fill="none" stroke="#2196f3" stroke-width="1.3"/></svg>
<svg class="abs" style="left:996.5px;top:305px" width="14" height="13" viewBox="0 0 28 26"><path d="M8 6L2 13l6 7M20 6l6 7-6 7M16 3l-4 20" fill="none" stroke="#2196f3" stroke-width="2.2"/></svg>
<div class="abs" style="left:1016.3px;top:304.5px;font-size:9.4px;color:#333">Custom SQL</div>

<div class="abs lbl" style="top:352.8px">Choose a table...</div>
<div class="abs val" style="top:366.5px">Glaccountbalance</div>
<svg class="abs" style="left:1136px;top:372.5px" width="8" height="4" viewBox="0 0 8 4"><path d="M0 0h8L4 4z" fill="#616161"/></svg>
<div class="abs" style="left:972px;top:384.3px;width:176px;height:1.2px;background:#c4c4c4"></div>
<div class="abs lbl" style="top:401.5px">Choose Columns...</div>

<div class="abs" style="left:972px;top:425.2px;width:171px;height:33.4px;background:#eeeeee"></div>
<div class="abs" style="left:1143px;top:425.2px;width:5px;height:134.5px;background:#dcdcdc"></div>
<div class="abs" style="left:1143px;top:425.2px;width:5px;height:11px;background:#5f6368"></div>
<div class="abs" style="left:972px;top:491px;width:171px;height:1px;background:#e6e6e6"></div>
<div class="abs" style="left:972px;top:524.2px;width:171px;height:1px;background:#e6e6e6"></div>
<div class="abs" style="left:972px;top:557.3px;width:171px;height:1px;background:#e6e6e6"></div>
<svg class="abs" style="left:980px;top:435.7px" width="12" height="12" viewBox="0 0 12 12"><rect width="12" height="12" rx="1.2" fill="#2196f3"/><path d="M2.5 6.2l2.4 2.4 4.7-4.8" fill="none" stroke="#fff" stroke-width="1.5"/></svg>
<svg class="abs" style="left:980px;top:468.7px" width="12" height="12" viewBox="0 0 12 12"><rect width="12" height="12" rx="1.2" fill="#2196f3"/><path d="M2.5 6.2l2.4 2.4 4.7-4.8" fill="none" stroke="#fff" stroke-width="1.5"/></svg>
<svg class="abs" style="left:980px;top:502.0px" width="12" height="12" viewBox="0 0 12 12"><rect width="12" height="12" rx="1.2" fill="#2196f3"/><path d="M2.5 6.2l2.4 2.4 4.7-4.8" fill="none" stroke="#fff" stroke-width="1.5"/></svg>
<svg class="abs" style="left:980px;top:535.2px" width="12" height="12" viewBox="0 0 12 12"><rect width="12" height="12" rx="1.2" fill="#2196f3"/><path d="M2.5 6.2l2.4 2.4 4.7-4.8" fill="none" stroke="#fff" stroke-width="1.5"/></svg>

<div class="abs th" style="left:1006px;top:436px">Column Name</div>
<div class="abs th" style="left:1087px;top:436px">Type Name</div>
<div class="abs td" style="left:1006.5px;top:469.3px">Accountno</div>
<div class="abs td" style="left:1086.5px;top:469.3px">VARCHAR</div>
<div class="abs td" style="left:1006.5px;top:502.6px">Accountrec</div>
<div class="abs td" style="left:1086.5px;top:502.6px">BIGINT</div>
<div class="abs td" style="left:1006.5px;top:535.8px">Accounttitle</div>
<div class="abs td" style="left:1086.5px;top:535.8px">VARCHAR</div>

<div class="abs" style="left:972px;top:579.5px;font-size:8.8px;color:#555">Filters</div>
<div class="abs" style="left:1005px;top:584.5px;width:10px;height:1px;background:#666"></div>
<div class="abs" style="left:1009.5px;top:580px;width:1px;height:10px;background:#666"></div>
<div class="abs" style="left:972px;top:617.5px;font-size:8.8px;color:#555">Sort By</div>
<div class="abs" style="left:1008px;top:621.5px;width:10px;height:1px;background:#666"></div>
<div class="abs" style="left:1012.5px;top:617px;width:1px;height:10px;background:#666"></div>

<!-- right strip -->
<div class="abs" style="left:1164.5px;top:39.5px;width:35.5px;height:609px;background:#f9fbfd"></div>
<svg class="abs" style="left:1176.5px;top:51px" width="13.5" height="13.5" viewBox="0 0 14 14"><rect x="0" y="0" width="14" height="14" rx="1" fill="#4285f4"/><rect x="0" y="10.5" width="3.5" height="3.5" fill="#34a853"/><rect x="10.5" y="0" width="3.5" height="10.5" fill="#fbbc04"/><rect x="10.5" y="10.5" width="3.5" height="3.5" fill="#ea4335"/><rect x="3" y="3" width="7.5" height="7.5" fill="#fff"/><text x="6.7" y="9.3" font-size="5" text-anchor="middle" fill="#4285f4" font-family="Liberation Sans">31</text></svg>
<svg class="abs" style="left:1176.5px;top:89px" width="13" height="13" viewBox="0 0 13 13"><rect width="13" height="13" rx="1.5" fill="#fbbc04"/><circle cx="6.5" cy="5.5" r="2.8" fill="#fff"/><rect x="5.2" y="8" width="2.6" height="2.3" fill="#fff"/></svg>
<svg class="abs" style="left:1177px;top:126.5px" width="13" height="13" viewBox="0 0 26 26"><circle cx="12.5" cy="13.5" r="9.5" fill="none" stroke="#1a73e8" stroke-width="3.2"/><path d="M7.5 13l4 4L24 4" fill="none" stroke="#1a73e8" stroke-width="3.2"/></svg>
<svg class="abs" style="left:1179.5px;top:165px" width="8" height="11.5" viewBox="0 0 20 24"><circle cx="10" cy="6" r="5" fill="#1a73e8"/><path d="M0 23v-4c0-4 4-6 10-6s10 2 10 6v4z" fill="#1a73e8"/></svg>
<svg class="abs" style="left:1177.5px;top:202px" width="11" height="14" viewBox="0 0 22 28"><path d="M11 1C5 1 1 5.5 1 11c0 7 10 16 10 16s10-9 10-16C21 5.5 17 1 11 1z" fill="#34a853"/><path d="M11 1C5 1 1 5.5 1 11l10 0z" fill="#ea4335"/><path d="M21 11C21 5.5 17 1 11 1v10z" fill="#4285f4"/><path d="M1 11c0 3 2 6 4 9l6-9z" fill="#fbbc04"/><circle cx="11" cy="11" r="3.5" fill="#fff"/></svg>
<div class="abs" style="left:1172px;top:239.5px;width:22px;height:1px;background:#e6e8eb"></div>
<div class="abs" style="left:1178px;top:269.5px;width:11px;height:1.3px;background:#444746"></div>
<div class="abs" style="left:1182.85px;top:264.5px;width:1.3px;height:11px;background:#444746"></div>

</body></html>
